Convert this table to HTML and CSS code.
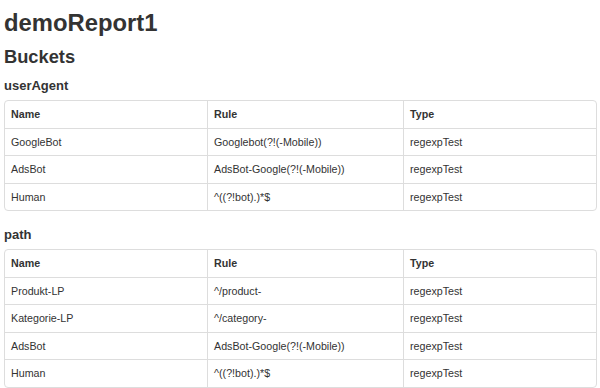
FILE: index.html
```html
<!DOCTYPE html>
<html>
<head>
<meta charset="utf-8">
<link rel="stylesheet" href="styles.css">
</head>
<body>
<div class="page">
  <h1 class="title">demoReport1</h1>
  <h2 class="section">Buckets</h2>

  <h4 class="group">userAgent</h4>
  <table class="grid">
    <colgroup><col class="c-name"><col class="c-rule"><col class="c-type"></colgroup>
    <thead>
      <tr><th>Name</th><th>Rule</th><th>Type</th></tr>
    </thead>
    <tbody>
      <tr><td>GoogleBot</td><td>Googlebot(?!(-Mobile))</td><td>regexpTest</td></tr>
      <tr><td>AdsBot</td><td>AdsBot-Google(?!(-Mobile))</td><td>regexpTest</td></tr>
      <tr><td>Human</td><td>^((?!bot).)*$</td><td>regexpTest</td></tr>
    </tbody>
  </table>

  <h4 class="group">path</h4>
  <table class="grid">
    <colgroup><col class="c-name"><col class="c-rule"><col class="c-type"></colgroup>
    <thead>
      <tr><th>Name</th><th>Rule</th><th>Type</th></tr>
    </thead>
    <tbody>
      <tr><td>Produkt-LP</td><td>^/product-</td><td>regexpTest</td></tr>
      <tr><td>Kategorie-LP</td><td>^/category-</td><td>regexpTest</td></tr>
      <tr><td>AdsBot</td><td>AdsBot-Google(?!(-Mobile))</td><td>regexpTest</td></tr>
      <tr><td>Human</td><td>^((?!bot).)*$</td><td>regexpTest</td></tr>
    </tbody>
  </table>
</div>
</body>
</html>
```

FILE: styles.css
```css
html, body {
  margin: 0;
  padding: 0;
  background: #fff;
}

body {
  font-family: "Liberation Sans", Arial, Helvetica, sans-serif;
  color: #333;
  font-size: 10.7px;
}

.page {
  padding: 0 3px 0 4px;
}

.title {
  margin: 9px 0 0;
  font-size: 23.8px;
  line-height: 28px;
  font-weight: bold;
}

.section {
  margin: 9px 0 0;
  font-size: 18.3px;
  line-height: 22px;
  font-weight: bold;
}

.group {
  margin: 10px 0 6px;
  font-size: 13px;
  line-height: 16px;
  font-weight: bold;
}

.grid {
  width: 100%;
  table-layout: fixed;
  border-collapse: separate;
  border-spacing: 0;
  border: 1px solid #ddd;
  border-radius: 4px;
  margin-bottom: 16px;
}

.c-name { width: 202px; }
.c-rule { width: 196px; }
.c-type { width: auto; }

.grid th,
.grid td {
  padding: 6px 6px;
  line-height: 14.5px;
  text-align: left;
  vertical-align: top;
  border-top: 1px solid #ddd;
  border-left: 1px solid #ddd;
  white-space: nowrap;
}

.grid th {
  font-weight: bold;
  border-top: 0;
}

.grid th:first-child,
.grid td:first-child {
  border-left: 0;
}
```
